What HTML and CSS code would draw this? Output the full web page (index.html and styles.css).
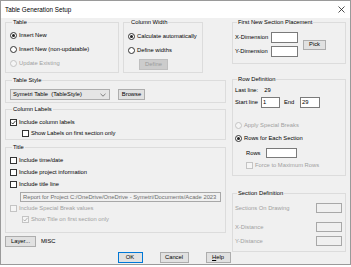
FILE: index.html
```html
<!DOCTYPE html>
<html lang="en">
<head>
    <meta charset="UTF-8">
    <title>Table Generation Setup</title>
    <link rel="stylesheet" href="styles.css">
</head>
<body>
<div class="window">
    <div class="titlebar">
        <span class="title">Table Generation Setup</span>
        <svg class="close" width="7" height="7" viewBox="0 0 7 7"><path d="M0.5 0.5L6.5 6.5M6.5 0.5L0.5 6.5"/></svg>
    </div>
    <div class="content">
        <div class="main">
            <div class="left">
                <div class="toprow">
                    <fieldset class="group g-table">
                        <legend>Table</legend>
                        <div class="opt tall"><span class="radio on"></span>Insert New</div>
                        <div class="opt tall"><span class="radio"></span>Insert New (non-updatable)</div>
                        <div class="opt tall off"><span class="radio"></span>Update Existing</div>
                    </fieldset>
                    <fieldset class="group g-colwidth">
                        <legend>Column Width</legend>
                        <div class="opt tall"><span class="radio on"></span>Calculate automatically</div>
                        <div class="opt tall"><span class="radio"></span>Define widths</div>
                        <div class="btn dis define">Define</div>
                    </fieldset>
                </div>
                <fieldset class="group g-style">
                    <legend>Table Style</legend>
                    <div class="row">
                        <div class="combo"><span>Symetri Table&nbsp; (TableStyle)</span>
                            <svg width="6" height="4" viewBox="0 0 6 4"><path d="M0.5 0.8L3 3.2L5.5 0.8"/></svg>
                        </div>
                        <div class="btn browse">Browse</div>
                    </div>
                </fieldset>
                <fieldset class="group g-labels">
                    <legend>Column Labels</legend>
                    <div class="opt"><span class="check on"><svg width="5" height="5" viewBox="0 0 5 5"><path d="M0.4 2.6L1.8 4L4.6 0.8"/></svg></span>Include column labels</div>
                    <div class="opt sub"><span class="check"></span>Show Labels on first section only</div>
                </fieldset>
                <fieldset class="group g-title">
                    <legend>Title</legend>
                    <div class="opt"><span class="check"></span>Include time/date</div>
                    <div class="opt gap2"><span class="check"></span>Include project information</div>
                    <div class="opt gap2"><span class="check"></span>Include title line</div>
                    <div class="textbox dis report">Report for Project C:/OneDrive/OneDrive - Symetri/Documents/Acade 2023</div>
                    <div class="opt off special"><span class="check"></span>Include Special Break values</div>
                    <div class="opt off sub showtitle"><span class="check on"><svg width="5" height="5" viewBox="0 0 5 5"><path d="M0.4 2.6L1.8 4L4.6 0.8"/></svg></span>Show Title on first section only</div>
                </fieldset>
                <div class="layer-row">
                    <div class="btn layer">Layer...</div>
                    <span class="misc">MISC</span>
                </div>
            </div>
            <div class="right">
                <fieldset class="group g-place">
                    <legend>First New Section Placement</legend>
                    <div class="row">
                        <div class="dims">
                            <div class="field"><span class="flabel">X-Dimension</span><div class="textbox dim"></div></div>
                            <div class="field"><span class="flabel">Y-Dimension</span><div class="textbox dim"></div></div>
                        </div>
                        <div class="btn pick">Pick</div>
                    </div>
                </fieldset>
                <fieldset class="group g-rows">
                    <legend>Row Definition</legend>
                    <div class="opt">Last line:<span class="lastval">29</span></div>
                    <div class="field lines">
                        <span class="startlbl">Start line</span><div class="textbox num">1</div>
                        <span class="endlbl">End</span><div class="textbox num end">29</div>
                    </div>
                    <div class="opt off breaks"><span class="radio"></span>Apply Special Breaks</div>
                    <div class="opt each"><span class="radio on"></span>Rows for Each Section</div>
                    <div class="field rowsfield"><span class="rowslbl">Rows</span><div class="textbox rowsbox"></div></div>
                    <div class="opt off force"><span class="check"></span>Force to Maximum Rows</div>
                </fieldset>
                <fieldset class="group g-section">
                    <legend>Section Definition</legend>
                    <div class="field sect off"><span>Sections On Drawing</span><div class="textbox dis sbox"></div></div>
                    <div class="field sect off s2"><span>X-Distance</span><div class="textbox dis sbox"></div></div>
                    <div class="field sect off s3"><span>Y-Distance</span><div class="textbox dis sbox"></div></div>
                </fieldset>
            </div>
        </div>
        <div class="buttons">
            <div class="btn ok">OK</div>
            <div class="btn cancel">Cancel</div>
            <div class="btn help"><u>H</u>elp</div>
        </div>
    </div>
</div>
</body>
</html>
```

FILE: styles.css
```css
body {
    margin: 0;
    background: #ffffff;
    font-family: "Liberation Sans", Arial, sans-serif;
    font-size: 5.8px;
    line-height: 7px;
    color: #000000;
}
.window {
    width: 351px;
    height: 265px;
    box-sizing: border-box;
    border: 1px solid #9a9a9a;
    background: #f0f0f0;
}
.titlebar {
    height: 17px;
    background: #ffffff;
    display: flex;
    align-items: center;
    padding: 0 5px 0 4px;
}
.title {
    font-size: 6.3px;
    flex: 1;
}
.close path {
    stroke: #222222;
    stroke-width: 0.8;
    fill: none;
}
.content {
    padding: 1px 4px 0 4px;
}
.main {
    display: flex;
    gap: 6px;
    height: 233px;
}
.left {
    width: 221px;
    display: flex;
    flex-direction: column;
}
.right {
    width: 114px;
    display: flex;
    flex-direction: column;
}
.toprow {
    display: flex;
}

/* group boxes */
.group {
    margin: 0;
    padding: 0;
    min-width: 0;
    box-sizing: border-box;
    border: 1px solid #dcdcdc;
}
.group legend {
    padding: 0 1px;
    margin-left: 2px;
    line-height: 7px;
}
.g-table {
    width: 114px;
    height: 54px;
    padding: 2px 0 0 4px;
}
.g-colwidth {
    width: 80px;
    height: 54px;
    margin-left: 4px;
    padding: 3px 0 0 4px;
}
.g-style {
    margin-top: 4px;
    height: 26px;
    padding: 5px 0 0 4px;
}
.g-labels {
    margin-top: 3px;
    height: 34px;
    padding: 4px 0 0 4px;
}
.g-title {
    margin-top: 4px;
    height: 89px;
    padding: 4px 0 0 4px;
}
.g-place {
    height: 45px;
    padding: 6px 0 0 2px;
}
.g-rows {
    margin-top: 12px;
    height: 100px;
    padding: 2px 0 0 2px;
}
.g-section {
    margin-top: 14px;
    height: 62px;
    padding: 6px 3px 0 2px;
}

/* options */
.opt {
    display: flex;
    align-items: center;
    height: 10px;
    white-space: nowrap;
}
.opt.tall {
    height: 14px;
}
.opt.off, .field.off {
    color: #a0a0a0;
}
.opt.sub {
    margin-left: 12px;
    margin-top: 1px;
}
.opt.gap2 {
    margin-top: 2px;
}
.radio, .check {
    width: 7px;
    height: 7px;
    box-sizing: border-box;
    border: 1px solid #333333;
    background: #ffffff;
    margin-right: 2px;
    flex: none;
    display: flex;
    align-items: center;
    justify-content: center;
}
.radio {
    border-radius: 50%;
}
.radio.on::after {
    content: "";
    width: 3px;
    height: 3px;
    border-radius: 50%;
    background: #222222;
}
.check path {
    stroke: #222222;
    stroke-width: 0.9;
    fill: none;
}
.off .radio, .off .check {
    border-color: #c4c4c4;
    background: #f5f5f5;
}
.off .check path {
    stroke: #a8a8a8;
}

/* buttons and boxes */
.btn {
    box-sizing: border-box;
    background: #e1e1e1;
    border: 1px solid #adadad;
    display: flex;
    align-items: center;
    justify-content: center;
    height: 11px;
    white-space: nowrap;
}
.btn.dis {
    background: #cccccc;
    border-color: #bfbfbf;
    color: #9a9a9a;
}
.define {
    width: 29px;
    margin: 2px 0 0 11px;
}
.textbox {
    box-sizing: border-box;
    background: #ffffff;
    border: 1px solid #7a7a7a;
    height: 11px;
    line-height: 9px;
    padding-left: 1px;
    overflow: hidden;
    white-space: nowrap;
}
.textbox.dis {
    background: #f0f0f0;
    border-color: #a8a8a8;
    color: #6d6d6d;
}
.row {
    display: flex;
    align-items: center;
}
.combo {
    box-sizing: border-box;
    width: 100px;
    height: 11px;
    background: #e5e5e5;
    border: 1px solid #adadad;
    display: flex;
    align-items: center;
    justify-content: space-between;
    padding: 0 3px 0 2px;
}
.combo path {
    stroke: #555555;
    stroke-width: 0.7;
    fill: none;
}
.browse {
    width: 27px;
    margin-left: 8px;
}
.report {
    margin: 3px 0 0 10px;
    width: 201px;
    height: 10px;
    line-height: 8px;
    padding-left: 2px;
}
.special {
    margin-top: 1px;
}
.showtitle {
    margin-top: 6px;
}
.layer-row {
    margin-top: 3px;
    display: flex;
    align-items: center;
}
.layer {
    width: 31px;
}
.misc {
    margin-left: 5px;
}

/* right column */
.dims {
    display: flex;
    flex-direction: column;
    gap: 3px;
}
.field {
    display: flex;
    align-items: center;
    white-space: nowrap;
}
.flabel {
    width: 36px;
}
.dim {
    width: 27px;
}
.pick {
    width: 23px;
    height: 10px;
    margin-left: 5px;
}
.lastval {
    margin-left: 6px;
}
.lines {
    margin-top: 2px;
}
.startlbl {
    width: 26px;
}
.endlbl {
    margin-left: 4px;
    width: 16px;
}
.num {
    width: 19px;
}
.num.end {
    width: 20px;
}
.breaks {
    margin-top: 12px;
}
.each {
    margin-top: 3px;
}
.rowsfield {
    margin: 5px 0 0 11px;
}
.rowslbl {
    width: 20px;
}
.rowsbox {
    width: 31px;
    height: 10px;
}
.force {
    margin: 2px 0 0 11px;
}
.sect {
    justify-content: space-between;
    height: 10px;
}
.sbox {
    width: 26px;
    height: 10px;
}
.s2 {
    margin-top: 9px;
}
.s3 {
    margin-top: 4px;
}

/* dialog buttons */
.buttons {
    display: flex;
    justify-content: center;
    gap: 17px;
    padding-right: 3px;
}
.ok {
    width: 25px;
    border-color: #0078d7;
}
.cancel {
    width: 29px;
}
.help {
    width: 25px;
}
```
